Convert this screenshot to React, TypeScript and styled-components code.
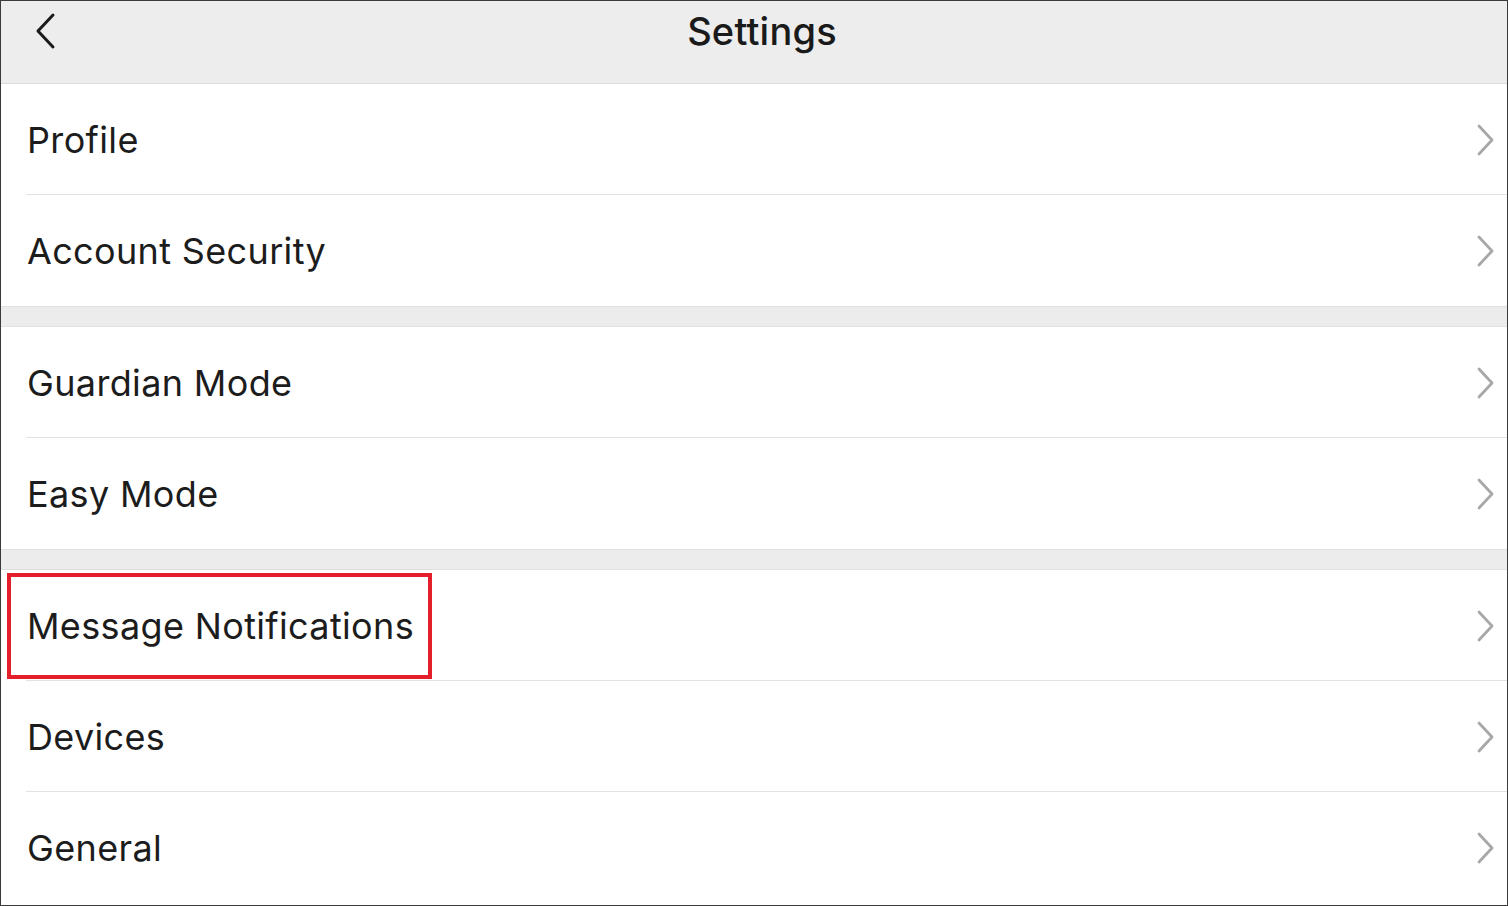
import React from 'react';
import styled, { createGlobalStyle } from 'styled-components';

const GlobalStyle = createGlobalStyle`
  html, body {
    margin: 0;
    padding: 0;
    background: #ffffff;
  }
  body {
    font-family: Inter, "Noto Sans", "Liberation Sans", sans-serif;
    -webkit-font-smoothing: antialiased;
  }
`;

const Screen = styled.div`
  width: 1508px;
  height: 906px;
  box-sizing: border-box;
  border: 1px solid #3a3a3a;
  background: #ffffff;
  display: flex;
  flex-direction: column;
  overflow: hidden;
`;

const NavBar = styled.div`
  height: 82px;
  flex: none;
  background: #ededed;
  border-bottom: 1px solid #dcdcdc;
  display: grid;
  grid-template-columns: 200px 1fr 200px;
  align-items: center;
`;

const BackButton = styled.div`
  display: flex;
  align-items: center;
  padding-left: 34px;
  padding-bottom: 22px;
`;

const Title = styled.div`
  text-align: center;
  font-size: 38px;
  font-weight: 500;
  color: #1a1a1a;
  padding-bottom: 22px;
  padding-left: 16px;
  letter-spacing: 0.2px;
`;

const Group = styled.div`
  display: flex;
  flex-direction: column;
`;

const Spacer = styled.div`
  height: 19px;
  flex: none;
  background: #ececec;
  border-top: 1px solid #e0e0e0;
  border-bottom: 1px solid #e0e0e0;
`;

const Row = styled.div<{ $last?: boolean }>`
  position: relative;
  height: 111px;
  box-sizing: border-box;
  display: flex;
  align-items: center;
  justify-content: space-between;
  padding-left: 26px;
  padding-right: 12px;

  &::after {
    content: '';
    display: ${({ $last }) => ($last ? 'none' : 'block')};
    position: absolute;
    left: 25px;
    right: 0;
    bottom: 0;
    height: 1px;
    background: #e2e2e2;
  }
`;

const Label = styled.span`
  font-size: 36px;
  color: #1c1c1c;
  letter-spacing: 0.35px;
`;

const Highlight = styled.div`
  position: absolute;
  left: 6px;
  top: 3px;
  width: 425px;
  height: 106px;
  box-sizing: border-box;
  border: 4px solid #e41e2b;
  pointer-events: none;
`;

const Chevron = () => (
  <svg width="18" height="32" viewBox="0 0 18 32" fill="none">
    <path d="M2 2 L15 16 L2 30" stroke="#a8a8a8" strokeWidth="2.8" strokeLinecap="round" strokeLinejoin="round" />
  </svg>
);

const BackIcon = () => (
  <svg width="22" height="38" viewBox="0 0 22 38" fill="none">
    <path d="M18 3 L3 19 L18 35" stroke="#1a1a1a" strokeWidth="3" strokeLinecap="round" strokeLinejoin="round" />
  </svg>
);

const groups: string[][] = [
  ['Profile', 'Account Security'],
  ['Guardian Mode', 'Easy Mode'],
  ['Message Notifications', 'Devices', 'General'],
];

export default function App() {
  return (
    <>
      <GlobalStyle />
      <Screen>
        <NavBar>
          <BackButton>
            <BackIcon />
          </BackButton>
          <Title>Settings</Title>
          <div />
        </NavBar>
        {groups.map((items, gi) => (
          <React.Fragment key={gi}>
            {gi > 0 && <Spacer />}
            <Group>
              {items.map((item, i) => (
                <Row key={item} $last={i === items.length - 1}>
                  <Label>{item}</Label>
                  <Chevron />
                  {item === 'Message Notifications' && <Highlight />}
                </Row>
              ))}
            </Group>
          </React.Fragment>
        ))}
      </Screen>
    </>
  );
}
